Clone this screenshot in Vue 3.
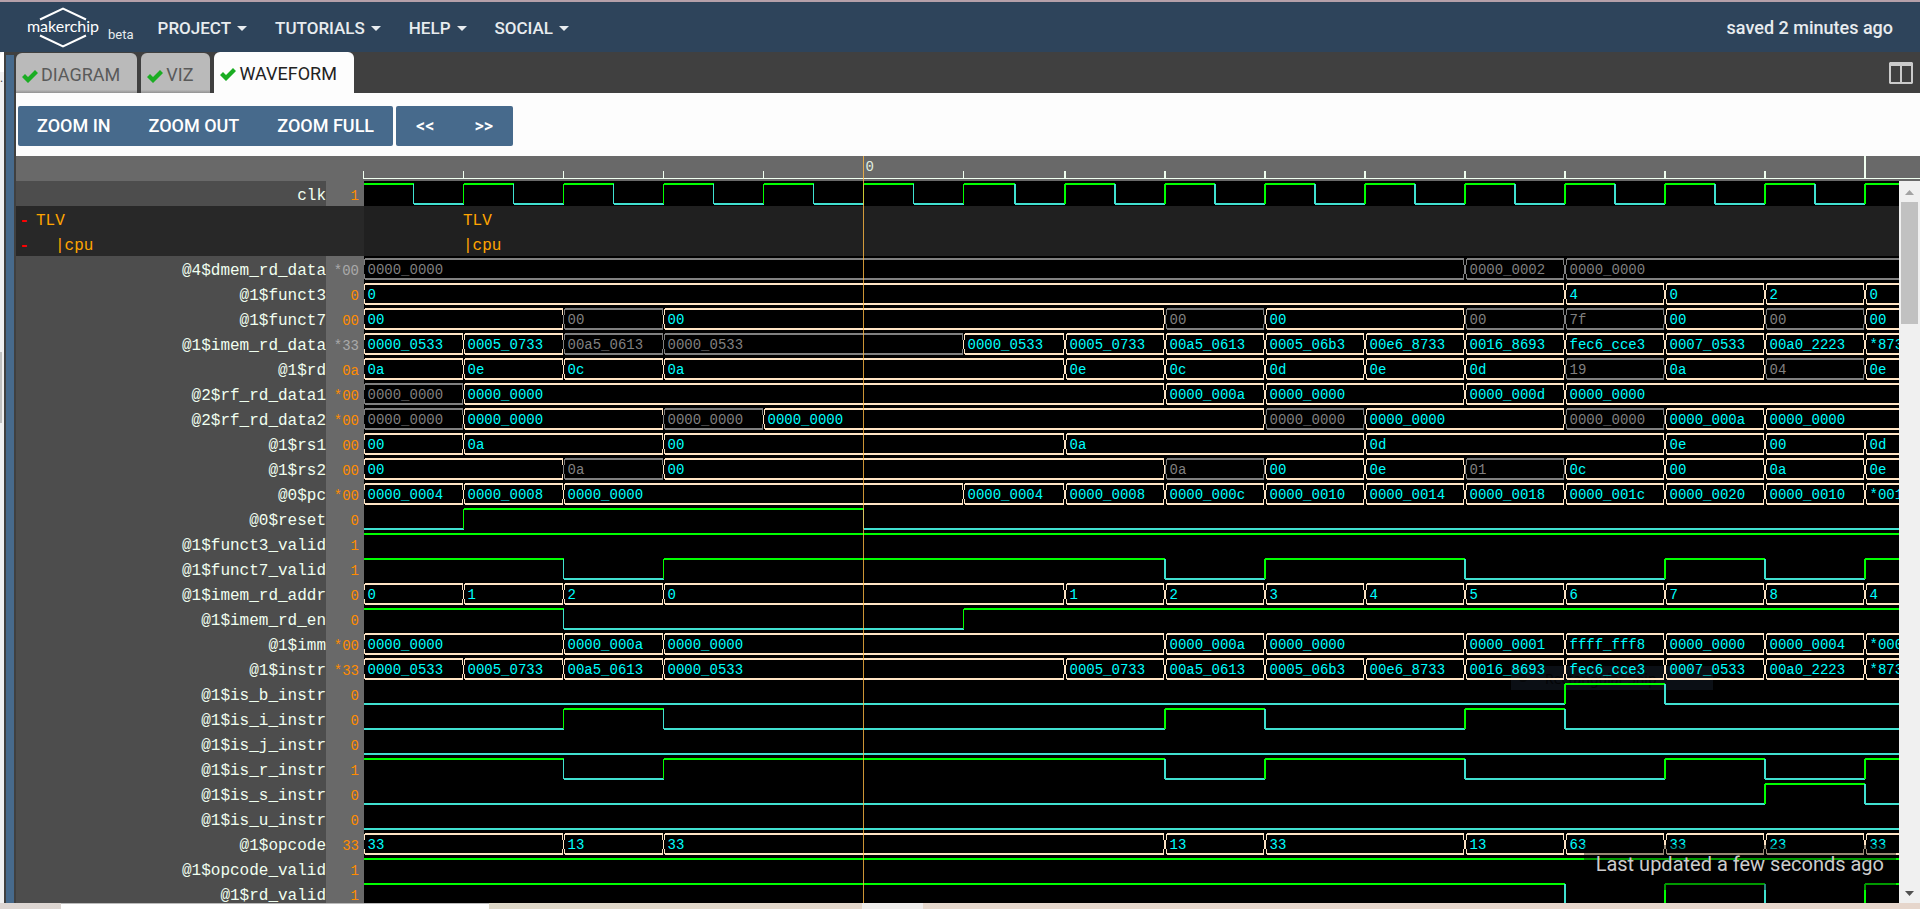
<script setup>
const menus = ['PROJECT', 'TUTORIALS', 'HELP', 'SOCIAL']
const tabs = [
  { name: 'DIAGRAM', active: false },
  { name: 'VIZ', active: false },
  { name: 'WAVEFORM', active: true },
]

const ROW = 25
const END = 16

// Horizontal position of a clock edge
const edge = (i) => (i <= 6 ? i * 100 - 0.5 : i * 100 + 1)
const half = (i) => (i <= 5 ? i * 100 + 49.5 : i * 100 + 51)
const thickness = (i) => (i <= 6 ? 1 : 2)

// A bus is "cycle:value" pairs; "~" marks a value that is not valid
const signals = [
  { name: 'clk', value: '1', clock: true },
  { scope: 'TLV', depth: 0 },
  { scope: '|cpu', depth: 1 },
  { name: '@4$dmem_rd_data', value: '*00', off: true, bus: '0:~0000_0000 11:~0000_0002 12:~0000_0000' },
  { name: '@1$funct3', value: '0', bus: '0:0 12:4 13:0 14:2 15:0' },
  { name: '@1$funct7', value: '00', bus: '0:00 2:~00 3:00 8:~00 9:00 11:~00 12:~7f 13:00 14:~00 15:00' },
  { name: '@1$imem_rd_data', value: '*33', off: true, bus: '0:0000_0533 1:0005_0733 2:~00a5_0613 3:~0000_0533 6:0000_0533 7:0005_0733 8:00a5_0613 9:0005_06b3 10:00e6_8733 11:0016_8693 12:fec6_cce3 13:0007_0533 14:00a0_2223 15:*8733' },
  { name: '@1$rd', value: '0a', bus: '0:0a 1:0e 2:0c 3:0a 7:0e 8:0c 9:0d 10:0e 11:0d 12:~19 13:0a 14:~04 15:0e' },
  { name: '@2$rf_rd_data1', value: '*00', bus: '0:~0000_0000 1:0000_0000 8:0000_000a 9:0000_0000 11:0000_000d 12:0000_0000' },
  { name: '@2$rf_rd_data2', value: '*00', bus: '0:~0000_0000 1:0000_0000 3:~0000_0000 4:0000_0000 9:~0000_0000 10:0000_0000 12:~0000_0000 13:0000_000a 14:0000_0000' },
  { name: '@1$rs1', value: '00', bus: '0:00 1:0a 3:00 7:0a 10:0d 13:0e 14:00 15:0d' },
  { name: '@1$rs2', value: '00', bus: '0:00 2:~0a 3:00 8:~0a 9:00 10:0e 11:~01 12:0c 13:00 14:0a 15:0e' },
  { name: '@0$pc', value: '*00', bus: '0:0000_0004 1:0000_0008 2:0000_0000 6:0000_0004 7:0000_0008 8:0000_000c 9:0000_0010 10:0000_0014 11:0000_0018 12:0000_001c 13:0000_0020 14:0000_0010 15:*0014' },
  { name: '@0$reset', value: '0', bits: [0, 1, 5] },
  { name: '@1$funct3_valid', value: '1', bits: [1] },
  { name: '@1$funct7_valid', value: '1', bits: [1, 2, 3, 8, 9, 11, 13, 14, 15] },
  { name: '@1$imem_rd_addr', value: '0', bus: '0:0 1:1 2:2 3:0 7:1 8:2 9:3 10:4 11:5 12:6 13:7 14:8 15:4' },
  { name: '@1$imem_rd_en', value: '0', bits: [1, 2, 6] },
  { name: '@1$imm', value: '*00', bus: '0:0000_0000 2:0000_000a 3:0000_0000 8:0000_000a 9:0000_0000 11:0000_0001 12:ffff_fff8 13:0000_0000 14:0000_0004 15:*0004' },
  { name: '@1$instr', value: '*33', bus: '0:0000_0533 1:0005_0733 2:00a5_0613 3:0000_0533 7:0005_0733 8:00a5_0613 9:0005_06b3 10:00e6_8733 11:0016_8693 12:fec6_cce3 13:0007_0533 14:00a0_2223 15:*8733' },
  { name: '@1$is_b_instr', value: '0', bits: [0, 12, 13] },
  { name: '@1$is_i_instr', value: '0', bits: [0, 2, 3, 8, 9, 11, 12] },
  { name: '@1$is_j_instr', value: '0', bits: [0] },
  { name: '@1$is_r_instr', value: '1', bits: [1, 2, 3, 8, 9, 11, 13, 14, 15] },
  { name: '@1$is_s_instr', value: '0', bits: [0, 14, 15] },
  { name: '@1$is_u_instr', value: '0', bits: [0] },
  { name: '@1$opcode', value: '33', bus: '0:33 2:13 3:33 8:13 9:33 11:13 12:63 13:33 14:23 15:33' },
  { name: '@1$opcode_valid', value: '1', bits: [1] },
  { name: '@1$rd_valid', value: '1', bits: [1, 12, 13, 14, 15] },
]

// bits: the starting level, then each cycle at which the level flips
function levels(signal) {
  const flips = []
  if (signal.clock) {
    for (let i = 0; i < END; i++) {
      if (i) flips.push({ x: edge(i), w: thickness(i) })
      flips.push({ x: half(i), w: thickness(i + 1 > 6 ? 7 : i) })
    }
  } else {
    signal.bits.slice(1).forEach((i) => flips.push({ x: edge(i), w: thickness(i) }))
  }
  let level = signal.clock ? 1 : signal.bits[0]
  let from = -1
  const out = []
  for (const f of [...flips, { x: edge(END), w: 0 }]) {
    out.push({ kind: level ? 'high' : 'low', w: 2, d: `M${from} ${level ? 3 : 23}H${f.x}` })
    if (f.w) {
      level = 1 - level
      out.push({ kind: level ? 'high' : 'low', w: f.w, d: `M${f.x} 3V23` })
    }
    from = f.x
  }
  return out
}

function cells(bus) {
  const parts = bus.split(' ').map((p) => {
    const [at, raw] = p.split(':')
    return { at: +at, off: raw.startsWith('~'), text: raw.replace('~', '') }
  })
  return parts.map((p, n) => {
    const end = parts[n + 1]?.at ?? END
    const a = edge(p.at) + (thickness(p.at) - 1) / 2
    const b = edge(end) - (thickness(end) - 1) / 2
    return {
      ...p,
      x: a + 4,
      rails: `M${a + 1} 3H${b - 1}M${a + 1} 23H${b - 1}`,
      sides: `M${a + 1} 3V9M${a} 9V18M${a + 1} 18V23M${b - 1} 3V9M${b} 9V18M${b - 1} 18V23`,
    }
  })
}

const rows = signals.map((s, i) => ({
  ...s,
  y: i * ROW,
  lines: s.clock || s.bits ? levels(s) : [],
  cells: s.bus ? cells(s.bus) : [],
}))
const ticks = Array.from({ length: END }, (_, i) => i)
</script>

<template>
  <div class="page">
    <header class="navbar">
      <a class="brand" href="#" aria-label="makerchip">
        <svg width="76" height="44" viewBox="0 0 76 44">
          <path d="M15 14.500L38 3.500L61 14.500M15 30.500L38 41.500L61 30.500" fill="none" stroke="#fff" stroke-width="2" />
          <text x="38" y="27" text-anchor="middle" class="logo-text">makerchip</text>
        </svg>
        <span class="beta">beta</span>
      </a>
      <nav class="menus">
        <button v-for="m in menus" :key="m" class="menu" type="button">{{ m }}<i class="caret"></i></button>
      </nav>
      <span class="saved">saved 2 minutes ago</span>
    </header>

    <main class="body">
      <aside class="side"><div class="side-tab"></div><div class="side-dots">.</div><div class="side-thumb"></div></aside>
      <div class="splitter"></div>
      <section class="panel">
        <div class="tabbar">
          <button v-for="t in tabs" :key="t.name" type="button" class="tab" :class="{ active: t.active }">
            <svg width="16" height="13" viewBox="0 0 16 13"><path d="M0 7L3 4L6 7L13 0L16 3L6 13Z" fill="#1bad23" /></svg>
            <span>{{ t.name }}</span>
          </button>
          <button class="split" type="button" aria-label="Split view">
            <svg width="24" height="22" viewBox="0 0 24 22">
              <path fill-rule="evenodd" fill="#cbcbcb" d="M1 0H23L24 1V21L23 22H1L0 21V1ZM2 4V20H11V4ZM13 4V20H22V4Z" />
            </svg>
          </button>
        </div>

        <div class="toolbar">
          <div class="group zoom">
            <button type="button">ZOOM IN</button>
            <button type="button">ZOOM OUT</button>
            <button type="button">ZOOM FULL</button>
          </div>
          <div class="group">
            <button type="button">&lt;&lt;</button>
            <button type="button">&gt;&gt;</button>
          </div>
        </div>

        <div class="viewer">
          <div class="ruler">
            <svg class="scale">
              <path d="M-1 22.500H3000" stroke="#f0fff0" stroke-width="1" />
              <template v-for="i in ticks" :key="i">
                <path v-if="i !== 5" :d="`M${edge(i)} ${i === 15 ? 0 : 15}V22`" stroke="#f0fff0" :stroke-width="thickness(i)" />
              </template>
              <text :x="edge(5) + 2" y="15" class="stamp">0</text>
            </svg>
          </div>
          <div class="scroll">
            <div class="names">
              <div v-for="(r, i) in rows" :key="i" class="row" :class="{ scope: r.scope }">
                <template v-if="r.scope">
                  <button type="button" class="fold">-</button>
                  <span :class="'depth' + r.depth">{{ r.scope }}</span>
                </template>
                <template v-else>
                  <span class="name">{{ r.name }}</span>
                  <span class="value" :class="{ off: r.off }">{{ r.value }}</span>
                </template>
              </div>
            </div>
            <div class="waves">
              <svg class="canvas">
                <rect x="0" y="25" width="100%" height="50" fill="#202020" />
                <g class="snip">
                  <rect x="1147" y="485" width="202" height="24" fill="#0b0f15" />
                  <circle cx="1159" cy="497" r="4" fill="#07090b" />
                  <text x="1181" y="503">Rectangular Snip</text>
                </g>
                <g v-for="(r, i) in rows" :key="i" :transform="`translate(0 ${r.y})`">
                  <text v-if="r.scope" x="99" y="19" class="scope-text">{{ r.scope }}</text>
                  <path v-for="(l, n) in r.lines" :key="'l' + n" :d="l.d" :class="l.kind" :stroke-width="l.w" />
                  <g v-for="(c, n) in r.cells" :key="'c' + n" :class="['cell', { off: c.off }]">
                    <path :d="c.rails" stroke-width="2" />
                    <path :d="c.sides" stroke-width="1" />
                    <text :x="c.x" y="18">{{ c.text }}</text>
                  </g>
                </g>
              </svg>
            </div>
            <div class="scrollbar">
              <svg width="21" height="21" viewBox="0 0 21 21"><path d="M6 14L10.500 9L15 14Z" fill="#a3a3a3" /></svg>
              <div class="thumb"></div>
              <svg class="down" width="21" height="21" viewBox="0 0 21 21"><path d="M6 9L10.500 14L15 9Z" fill="#505050" /></svg>
            </div>
          </div>
          <svg class="cursor" width="1" height="100%"><rect width="1" height="100%" fill="#ffb942" fill-opacity="0.800" /></svg>
          <div class="toast">Last updated a few seconds ago</div>
        </div>
      </section>
    </main>
    <footer class="desk"><div class="sheet"></div><div class="chip"></div></footer>
  </div>
</template>

<style>
body { margin: 0; overflow: hidden; }
</style>

<style scoped>
.page {
  display: flex; flex-direction: column; height: 100vh; box-sizing: border-box;
  border-top: 2px solid #b5a0a9; font-family: Roboto, "Liberation Sans", sans-serif; background: #fdfdfd;
}
button { font: inherit; border: 0; background: none; padding: 0; margin: 0; cursor: pointer; }
.navbar { display: flex; align-items: center; flex: none; height: 50px; background: #2e445b; color: #e8ecef; padding: 0 27px 0 25px; }
.brand { display: flex; align-items: center; gap: 7px; color: inherit; text-decoration: none; }
.brand svg { overflow: visible; display: block; }
.logo-text { font: 16px Lato, sans-serif; fill: #fff; }
.beta { font-size: 13px; line-height: 16px; margin-top: 16px; }
.menus { display: flex; gap: 28px; margin-left: 24px; padding-top: 2px; }
.menu { display: flex; align-items: center; gap: 6px; color: inherit; font-size: 17px; font-weight: 500; line-height: 24px; }
.caret { border: 5px solid transparent; border-top-color: currentColor; border-bottom: 0; }
.saved { margin-left: auto; padding-top: 2px; font-size: 18px; font-weight: 500; line-height: 24px; }
.body { display: flex; flex: 1; min-height: 0; }
.side { width: 4px; flex: none; overflow: hidden; background: #f0f0f1; }
.side-tab { height: 20px; background: #fff; border-top-left-radius: 4px; }
.side-dots { font-size: 12px; line-height: 12px; color: #444; }
.side-thumb { width: 2px; height: 71px; margin-top: 268px; background: #c1c1c1; }
.splitter { width: 8px; flex: none; background: #476a8c; border: solid #404040; border-width: 3px 2px 0; }
.panel { display: flex; flex-direction: column; flex: 1; min-width: 0; }
.tabbar { display: flex; align-items: flex-end; gap: 4px; height: 41px; flex: none; background: #404040; }
.tab {
  display: flex; align-items: center; gap: 3px; height: 40px; padding: 4px 17px 0 6px; color: #5a5a5a;
  font-size: 18px; line-height: 24px; border-radius: 6px 6px 0 0; background: linear-gradient(#bababa 92%, #929292);
}
.tab svg { margin-top: 2px; }
.tab.active { height: 41px; background: #fdfdfd; color: #222; padding-top: 2px; }
.split { margin-left: auto; margin-right: 7px; height: 41px; display: flex; align-items: center; }
.toolbar { display: flex; gap: 3px; padding: 13px 2px 10px; flex: none; }
.group { display: flex; background: #476a8c; border-radius: 2px; }
.group button { height: 40px; padding: 0 20px; color: #fff; font-size: 18px; font-weight: 500; line-height: 24px; }
.group.zoom button { padding: 0 19px; }
.viewer { position: relative; display: flex; flex-direction: column; flex: 1; min-height: 0; }
.ruler { height: 25px; flex: none; background: #696969; padding-left: 348px; }
.scale { display: block; width: 100%; height: 25px; overflow: visible; }
.scale path { shape-rendering: crispEdges; }
.stamp { font: 14px "Liberation Mono", monospace; fill: #e0efe0; }
.scroll { display: flex; flex: 1; min-height: 0; overflow: hidden; background: #000; }
.names { width: 348px; flex: none; font: 16px/25px "Liberation Mono", monospace; color: #f0fff0; }
.row { display: flex; height: 25px; background: #4d4d4d; }
.name { flex: 1; text-align: right; padding-top: 3px; height: 22px; }
.value { width: 33px; height: 22px; padding: 3px 5px 0 0; text-align: right; font-size: 14px; color: #ff8c00; background: #696969; }
.value.off { color: #a9a9a9; }
.scope { background: #282828; color: #ffa500; align-items: flex-start; padding: 3px 0 0 3px; height: 22px; }
.fold { color: #f00; font-weight: bold; width: 10px; margin-right: 7px; }
.depth1 { padding-left: 19px; }
.waves { flex: 1; min-width: 0; overflow: hidden; }
.canvas { display: block; width: 100%; height: 725px; }
.canvas path { fill: none; shape-rendering: crispEdges; }
.high { stroke: #0f0; }
.low { stroke: #40e0d0; }
.cell { stroke: #ffe4c4; }
.cell.off { stroke: #808080; }
.cell text { font: 14px "Liberation Mono", monospace; stroke: none; fill: #0ff; }
.cell.off text { fill: #808080; }
.scope-text { font: 16px "Liberation Mono", monospace; fill: #ffa500; }
.snip text { font: 14px "Noto Sans", sans-serif; fill: #030405; }
.scrollbar { display: flex; flex-direction: column; width: 21px; flex: none; background: #f0f0f0; }
.scrollbar svg { display: block; flex: none; }
.thumb { height: 122px; margin: 0 2px; background: #c1c1c1; }
.down { margin-top: auto; }
.cursor { position: absolute; left: 847px; top: 0; }
.toast {
  position: absolute; right: 24px; bottom: 13px; padding: 7px 12px 14px; font-size: 20px; line-height: 24px;
  color: #ccc; background: rgba(0, 0, 0, 0.400);
}
.desk { display: flex; height: 6px; flex: none; background: linear-gradient(90deg, #ddd6d3, #ded8c8 25%, #e6d8cd 50%, #e6d6cc); }
.sheet { width: 428px; margin-left: 61px; background: #fff; border-top: 1px solid #bbb; box-sizing: border-box; }
.chip { width: 61px; margin-left: 373px; background: #efeeec; }
</style>
